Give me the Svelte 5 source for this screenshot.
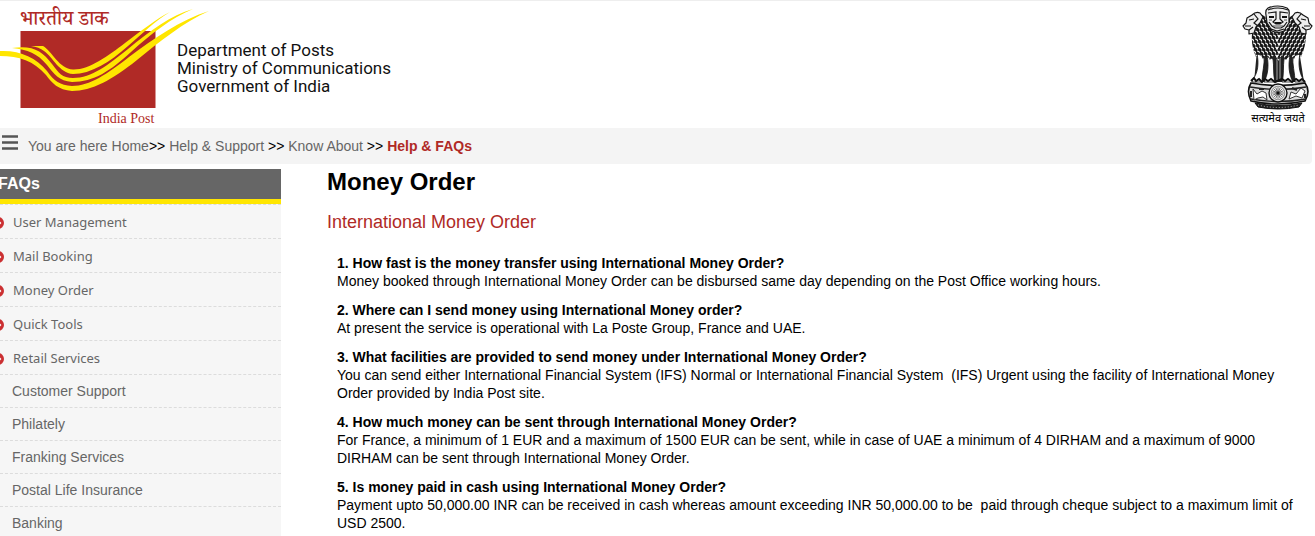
<script>
  const trail = ['You are here Home', 'Help & Support', 'Know About'];
  const primary = ['User Management', 'Mail Booking', 'Money Order', 'Quick Tools', 'Retail Services'];
  const secondary = ['Customer Support', 'Philately', 'Franking Services', 'Postal Life Insurance', 'Banking'];
  const faqs = [
    ['How fast is the money transfer using International Money Order?', 'Money booked through International Money Order can be disbursed same day depending on the Post Office working hours.'],
    ['Where can I send money using International Money order?', 'At present the service is operational with La Poste Group, France and UAE.'],
    ['What facilities are provided to send money under International Money Order?', 'You can send either International Financial System (IFS) Normal or International Financial System \u00a0(IFS) Urgent using the facility of International Money Order provided by India Post site.'],
    ['How much money can be sent through International Money Order?', 'For France, a minimum of 1 EUR and a maximum of 1500 EUR can be sent, while in case of UAE a minimum of 4 DIRHAM and a maximum of 9000 DIRHAM can be sent through International Money Order.'],
    ['Is money paid in cash using International Money Order?', 'Payment upto 50,000.00 INR can be received in cash whereas amount exceeding INR 50,000.00 to be \u00a0paid through cheque subject to a maximum limit of USD 2500.']
  ];
  // Staggered locks of fur, leaning outwards from the middle of each mane.
  const fur = Array.from({ length: 12 }, (_, r) =>
    Array.from({ length: 15 }, (_, c) => {
      const x = 11 + c * 4 + (r % 2) * 2;
      return { x, y: 15 + r * 4, lean: x < 39 ? 2.6 : -2.6 };
    })
  ).flat();
  const spokes = Array.from({ length: 16 }, (_, i) => i * 22.5);
  const mane = 'M16 15Q20 12 27 18L49 18Q55 12 61 15Q66 22 66 34Q66 46 61 57L57 52L54 59L50 54L46 60L42 55L38 61L34 55L30 60L26 54L23 59L19 52L16 57Q11 46 12 34Q10 22 16 15Z';
</script>

<div class="page">
  <header>
    <a class="brand" href="#home">
      <svg class="logo" width="210" height="127" viewBox="0 1 210 127" aria-hidden="true">
        <rect x="20.5" y="31" width="135" height="77" fill="#b02a26" />
        <g fill="#ffe600">
          <path d="M0 51C19 50 36 57 47 71C54 81 60 85 72 86C90 86 107 74 129 57C153 39 180 20 209 11C184 22 159 42 137 60C112 80 92 91 72 91C58 90 52 83 46 75C34 61 19 56 0 56Z" />
          <path d="M12 48C33 45 42 51 52 64C59 73 62 78 73 78C92 78 108 65 128 49C150 31 171 15 193 9C171 18 151 34 131 52C110 71 94 82 72 82C59 81 54 74 47 65C37 53 28 50 12 48Z" />
          <path d="M31 46H43C52 51 59 69 73 69.5C89 70 108 56 125 43C141 31 156 19 170 12C155 21 143 33 128 46C110 62 91 74 73 74C59 73 53 57 44 51Q39 47 31 46Z" />
        </g>
        <text x="20" y="25" class="hindi">भारतीय डाक</text>
        <text x="98" y="123" class="post">India Post</text>
      </svg>
      <span class="dept">Department of Posts<br />Ministry of Communications<br />Government of India</span>
    </a>
    <svg class="emblem" width="75" height="127" viewBox="0 1 75 127" role="img" aria-label="State Emblem of India">
      <defs><clipPath id="mane"><path d={mane} /></clipPath></defs>
      <path d="M17 50L14 82H64L59 50Z" fill="#222" />
      <g fill="#fff" stroke="#111" stroke-width=".8">
        <path d="M17 54C19 63 18 73 13 79L12 82H22C22 72 25 64 24 56Z" />
        <path d="M27 56C29 65 28 75 24 82H35C33 75 34 65 33 59Z" />
        <path d="M44 59C43 66 44 76 42 82H53C49 75 48 65 50 56Z" />
        <path d="M53 56C52 64 55 73 55 82H65L63 79C59 72 58 63 60 54Z" />
      </g>
      <path d="M37 58V80M40 58V80" stroke="#aaa" />
      <path d={mane} fill="#151515" />
      <g clip-path="url(#mane)" fill="none" stroke="#f5f5f5" stroke-width="1.2">
        {#each fur as f}<path d="M{f.x} {f.y}q{f.lean} 0 {f.lean} 2.4" />{/each}
      </g>
      <g stroke="#151515" fill="#eee" stroke-width="1.2" stroke-linejoin="round">
        <path d="M20 13Q16 11 12 15L7 18L6 23L3 26L5 29L9 30L9 34L14 33L16 27L20 23L23 17Z" />
        <path d="M55 13Q59 11 63 15L68 18L69 23L72 26L70 29L66 30L66 34L61 33L59 27L55 23L52 17Z" />
        <path d="M28 8Q38 4 47 8Q50 10 49 15L49 23Q46 27 44 31Q38 34 32 31Q30 27 27 23L26 15Q25 10 28 8Z" />
      </g>
      <g fill="none" stroke="#151515" stroke-width="1.2">
        <path d="M9 20L14 19M5 26H11M9 30L13 27M14 14L18 19L14 23L18 26M66 20L61 19M70 26H64M66 30L62 27M61 14L57 19L61 23L57 26" />
        <path d="M28 10Q38 6 48 10M28 13L36 12V19L33 22L36 24H40L43 22L40 19V12L48 13M29 22L32 26L35 28H41L44 26L47 22M31 29L37 31L44 29" />
      </g>
      <path d="M29 17H34M42 17H47M35 23H41" stroke="#111" stroke-width="2.2" />
      <path d="M29 20L32 20M44 20H47M33 26H43" stroke="#555" stroke-width="1.2" />
      <path d="M11 81L14 78L16 81L19 79L22 82L25 79L28 81L31 79L35 82L42 79L45 81L48 79L52 82L56 79L59 81L62 79L65 82" fill="none" stroke="#111" stroke-width="2" />
      <path d="M11 83Q6 91 11 101Q38 107 65 101Q71 91 65 83Q38 88 11 83Z" fill="#ddd" stroke="#111" stroke-width="1.6" />
      <path d="M10 87Q38 92 66 87M11 99Q38 104 66 99" fill="none" stroke="#222" stroke-width="1.4" />
      <path d="M13 89L17 94L22 91L26 93L27 100L23 97L18 98L14 100ZM49 99L51 92L56 94L61 88L65 91L62 98L56 96Z" fill="#fff" stroke="#333" />
      <path d="M11 91V97M65 94V98M52 88L57 90M19 89H24" stroke="#222" stroke-width="2" />
      <circle cx="38" cy="93" r="9" fill="#eee" stroke="#111" stroke-width="1.4" />
      <circle cx="38" cy="93" r="6.8" fill="none" stroke="#777" stroke-width=".8" />
      <g stroke="#333" stroke-width=".6">{#each spokes as a}<path d="M38 93V87" transform="rotate({a} 38 93)" />{/each}</g>
      <circle cx="38" cy="93" r="1.5" fill="#111" />
      <path d="M15 103Q38 108 62 103L59 107Q38 111 18 107Z" fill="#222" stroke="#111" />
      <path d="M18 105Q38 110 59 105" stroke="#bbb" stroke-dasharray="1 2" fill="none" />
      <text x="38" y="122" text-anchor="middle" class="motto">सत्यमेव जयते</text>
    </svg>
  </header>

  <div class="crumbs">
    <button class="menu" aria-label="Open menu">
      <svg width="16" height="15" viewBox="0 0 16 15" aria-hidden="true"><path d="M0 1.5H16M0 7.5H16M0 13.5H16" stroke="#555" stroke-width="2.4" /></svg>
    </button>
    <nav aria-label="Breadcrumb">
      {#each trail as item, i}<a href="#trail">{item}</a>{i === 0 ? '>> ' : ' >> '}{/each}<strong>Help &amp; FAQs</strong>
    </nav>
  </div>

  <div class="body">
    <aside>
      <h2>FAQs</h2>
      <ul>
        {#each primary as item}
          <li class="topic"><a href="#topic"><svg width="12" height="12" viewBox="0 0 12 12" aria-hidden="true"><circle cx="6" cy="6" r="6" fill="#cb3032" /><path d="M5 3L8 6L5 9" fill="none" stroke="#fff" stroke-width="2" /></svg>{item}</a></li>
        {/each}
        {#each secondary as item}<li><a href="#section">{item}</a></li>{/each}
      </ul>
    </aside>
    <main>
      <h1>Money Order</h1>
      <h3>International Money Order</h3>
      <div class="faqs">
        {#each faqs as [question, answer], i}
          <section>
            <h4>{i + 1}. {question}</h4>
            <p>{answer}</p>
          </section>
        {/each}
      </div>
    </main>
  </div>
</div>

<style>
  :global(body) { margin: 0; background: #fff; overflow: hidden; }
  .page { font-family: "Liberation Sans", Arial, sans-serif; font-size: 14px; line-height: 18px; color: #000; }
  h1, h2, h3, h4, p, ul { margin: 0; padding: 0; }
  a { color: #666; text-decoration: none; }
  header { display: flex; justify-content: space-between; border-top: 1px solid #eee; }
  .brand { display: flex; color: #111; }
  .logo { display: block; margin-right: -33px; overflow: visible; }
  .logo text { fill: #b02a26; }
  .hindi { font: 500 20px "Noto Serif Devanagari", "Noto Sans Devanagari", "Liberation Serif", serif; }
  .post { font: 14px "Liberation Serif", serif; }
  .dept { padding-top: 40px; font: 17px/18px Roboto, sans-serif; }
  .emblem { display: block; overflow: visible; }
  .motto { font: 11px "Noto Sans Devanagari", "Noto Sans", sans-serif; }
  .crumbs { display: flex; background: #f4f4f4; height: 36px; margin-right: 3px; border-radius: 0 4px 4px 0; }
  .menu { border: 0; padding: 0; margin: 7px 10px 0 2px; background: none; height: 15px; }
  .menu svg { display: block; }
  nav { padding-top: 9px; }
  nav strong { color: #b02a26; }
  .body { display: flex; align-items: flex-start; }
  aside { flex: 0 0 281px; margin-top: 5px; background: #f6f6f6; }
  h2 { background: #666; color: #fff; border-bottom: 5px solid #ffe600; font-size: 16px; line-height: 30px; text-indent: -2px; }
  ul { list-style: none; }
  li { border-top: 1px dashed #dcdcdc; }
  li a { display: block; padding-left: 12px; line-height: 32px; }
  .topic a { display: flex; align-items: center; line-height: 31px; padding: 2px 0 0; font-family: "Noto Sans", sans-serif; font-size: 13px; }
  .topic svg { margin: 0 9px 0 -8px; }
  main { flex: 1; padding: 4px 15px 0 46px; min-width: 0; }
  h1 { font-size: 24px; line-height: 28px; }
  h3 { color: #b02a26; font-size: 18px; font-weight: 400; line-height: 24px; margin-top: 14px; }
  .faqs { display: grid; gap: 11px; padding: 20px 0 0 10px; }
  h4 { font-size: 14px; }
</style>
